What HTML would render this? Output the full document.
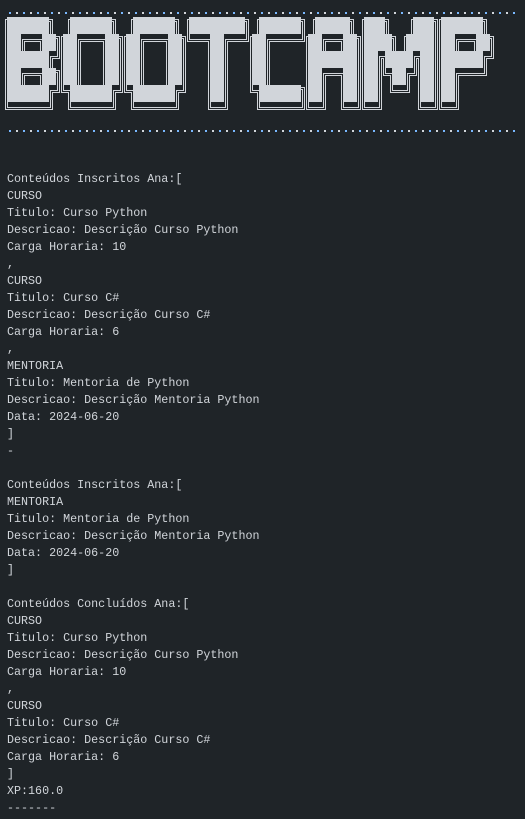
<!DOCTYPE html>
<html><head><meta charset="utf-8"><style>
html,body{margin:0;padding:0;background:#1f2428;width:525px;height:819px;overflow:hidden}
svg{position:absolute;left:0;top:0}
pre{position:absolute;left:7px;top:171px;margin:0;font-family:"Liberation Mono",monospace;font-size:11.7px;line-height:17px;color:#d1d5da}
</style></head><body>
<svg id="s" width="525" height="140"></svg>
<pre>Conteúdos Inscritos Ana:[
CURSO
Titulo: Curso Python
Descricao: Descrição Curso Python
Carga Horaria: 10
,
CURSO
Titulo: Curso C#
Descricao: Descrição Curso C#
Carga Horaria: 6
,
MENTORIA
Titulo: Mentoria de Python
Descricao: Descrição Mentoria Python
Data: 2024-06-20
]
-

Conteúdos Inscritos Ana:[
MENTORIA
Titulo: Mentoria de Python
Descricao: Descrição Mentoria Python
Data: 2024-06-20
]

Conteúdos Concluídos Ana:[
CURSO
Titulo: Curso Python
Descricao: Descrição Curso Python
Carga Horaria: 10
,
CURSO
Titulo: Curso C#
Descricao: Descrição Curso C#
Carga Horaria: 6
]
XP:160.0
-------</pre>
<script>
var rows={
0:[[0,5],[9,14],[18,23],[26,33],[36,41],[44,48],[51,53],[58,60],[62,67]],
1:[[0,1],[5,6],[8,9],[14,15],[17,18],[23,24],[29,30],[35,36],[43,44],[48,49],[51,54],[57,60],[62,63],[67,68]],
2:[[0,5],[8,9],[14,15],[17,18],[23,24],[29,30],[35,36],[43,49],[51,52],[54,57],[59,60],[62,67]],
3:[[0,1],[5,6],[8,9],[14,15],[17,18],[23,24],[29,30],[35,36],[43,44],[48,49],[51,52],[55,56],[59,60],[62,63]],
4:[[0,5],[9,14],[18,23],[29,30],[36,41],[43,44],[48,49],[51,52],[59,60],[62,63]]};
var rects=[];
for(var r in rows){rows[r].forEach(function(a){rects.push([7+a[0]*7,17+r*17,(a[1]-a[0]+1)*7,17]);});}
var h='';
var layers=[[3,'#d1d5da'],[2,'#1f2428'],[1,'#d1d5da'],[0,'#1f2428']];
layers.forEach(function(l){rects.forEach(function(q){var e=l[0];h+='<rect x="'+(q[0]+1-e)+'" y="'+(q[1]+5-e)+'" width="'+(q[2]+2*e)+'" height="'+(q[3]+2*e)+'" fill="'+l[1]+'"/>';});});
rects.forEach(function(q){h+='<rect x="'+q[0]+'" y="'+q[1]+'" width="'+q[2]+'" height="'+q[3]+'" fill="#d1d5da"/>';});
[12,130].forEach(function(y){for(var x=9,i=0;x<520;x+=7,i++){h+='<rect x="'+x+'" y="'+y+'" width="2" height="2" fill="'+(i%2?'#d1d5da':'#79b8ff')+'"/>';}});
document.getElementById('s').innerHTML=h;
</script>
</body></html>
